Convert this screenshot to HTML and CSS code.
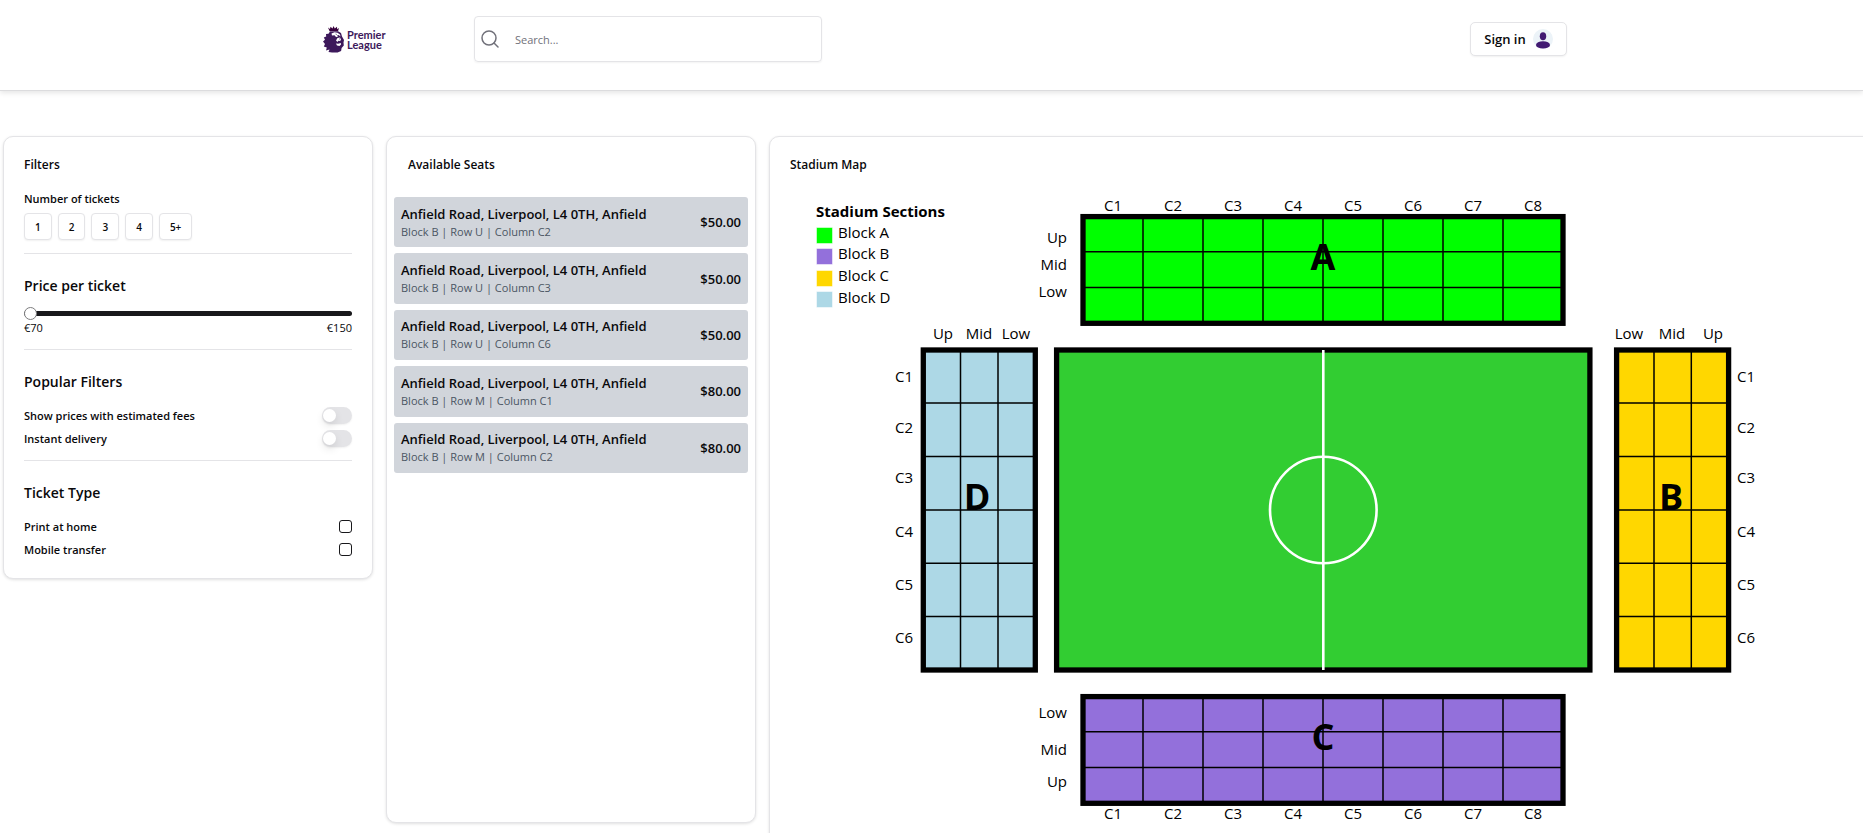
FILE: index.html
```html
<!DOCTYPE html>
<html lang="en">
<head>
<meta charset="utf-8">
<title>Premier League Tickets</title>
<link rel="stylesheet" href="styles.css">
</head>
<body>
<div class="page">
  <header class="topbar">
    <a class="logo" href="#" aria-label="Premier League">
      <svg class="logo-mark" viewBox="0 0 22 27" aria-hidden="true">
        <path fill="#37003c" d="M5 1.5 7 3 7.500.8 9.500 2.600 10.500 0l1.300 2.600L14 .8l.2 2.400L16 2l-1 3.200H6.600z"/>
        <path fill="#3d195b" d="M7 5.500 15 5.300 18 7l1 3.500 2 3.500-.5 2.500.3 3-2.200 2.500-.5 3-3.500 1.500H9L5.500 26l1-2.500-3.500 1 .8-3L.8 20.500 2 18 0 15.500l2-1.700L.8 11.500l2.400-1L3 8l2.500-.2z"/>
        <path fill="#fff" d="m8.500 7.500 3-1.200 3 .4 2.500 1.800.5 2-2-1.500-1.500.5 1 1.200-2 .3-1.500-1.700-2.500.2zM14.500 12l2.500-.5 1 2-.8 1.500-1.900-.3-.8 1.300-1.500-1.500zM13 17.500l2.200.2 2.600-.8.2 1.500-1.500 1.500-2.500-.4z"/>
        <path fill="#3d195b" d="m12 7.800 2 .1-.5.900zM16 12.800l1.200-.2-.4 1.200z"/>
      </svg>
      <span class="logo-name">Premier<br>League</span>
    </a>
    <label class="search">
      <svg class="search-icon" viewBox="0 0 18 18" aria-hidden="true"><circle cx="8" cy="8" r="7"/><path d="m13 13 4 4"/></svg>
      <input class="search-input" type="search" placeholder="Search..." aria-label="Search">
    </label>
    <button class="sign-in" type="button">Sign in
      <svg class="avatar" viewBox="0 0 20 20" aria-hidden="true"><circle cx="10" cy="10" r="10" fill="#ecf3f8"/><ellipse cx="10" cy="7.300" rx="3.200" ry="4" fill="#421a72"/><ellipse cx="10" cy="15.900" rx="7" ry="3.700" fill="#421a72"/></svg>
    </button>
  </header>

  <main class="columns">
    <section class="card filters">
      <h2 class="card-title">Filters</h2>
      <h3 class="label-title">Number of tickets</h3>
      <div class="counts">
        <button class="count" type="button">1</button>
        <button class="count" type="button">2</button>
        <button class="count" type="button">3</button>
        <button class="count" type="button">4</button>
        <button class="count" type="button">5+</button>
      </div>
      <hr class="rule">
      <h3 class="group-title">Price per ticket</h3>
      <input class="slider" type="range" min="70" max="150" value="70" aria-label="Price per ticket">
      <div class="range-ends"><span>€70</span><span>€150</span></div>
      <hr class="rule">
      <h3 class="group-title">Popular Filters</h3>
      <div class="options">
        <label class="option">Show prices with estimated fees<input class="switch" type="checkbox" role="switch"></label>
        <label class="option">Instant delivery<input class="switch" type="checkbox" role="switch"></label>
      </div>
      <hr class="rule rule-tight">
      <h3 class="group-title">Ticket Type</h3>
      <div class="options">
        <label class="option">Print at home<input class="tick" type="checkbox"></label>
        <label class="option">Mobile transfer<input class="tick" type="checkbox"></label>
      </div>
    </section>

    <section class="card seats">
      <h2 class="card-title">Available Seats</h2>
      <ul class="seat-list">
        <li class="seat"><div><p class="seat-place">Anfield Road, Liverpool, L4 0TH, Anfield</p><p class="seat-spot">Block B | Row U | Column C2</p></div><span class="price">$50.00</span></li>
        <li class="seat"><div><p class="seat-place">Anfield Road, Liverpool, L4 0TH, Anfield</p><p class="seat-spot">Block B | Row U | Column C3</p></div><span class="price">$50.00</span></li>
        <li class="seat"><div><p class="seat-place">Anfield Road, Liverpool, L4 0TH, Anfield</p><p class="seat-spot">Block B | Row U | Column C6</p></div><span class="price">$50.00</span></li>
        <li class="seat"><div><p class="seat-place">Anfield Road, Liverpool, L4 0TH, Anfield</p><p class="seat-spot">Block B | Row M | Column C1</p></div><span class="price">$80.00</span></li>
        <li class="seat"><div><p class="seat-place">Anfield Road, Liverpool, L4 0TH, Anfield</p><p class="seat-spot">Block B | Row M | Column C2</p></div><span class="price">$80.00</span></li>
      </ul>
    </section>

    <section class="card stadium">
      <h2 class="card-title">Stadium Map</h2>
      <svg class="map" viewBox="790 180 1068 680" role="img" aria-label="Stadium map">
        <g class="legend">
          <text class="legend-title" x="816" y="217">Stadium Sections</text>
          <rect class="a" x="816.500" y="227.500" width="16" height="16"/><text x="838" y="238">Block A</text>
          <rect class="c" x="816.500" y="248.500" width="16" height="16"/><text x="838" y="259">Block B</text>
          <rect class="b" x="816.500" y="270.500" width="16" height="16"/><text x="838" y="281">Block C</text>
          <rect class="d" x="816.500" y="291.500" width="16" height="16"/><text x="838" y="303">Block D</text>
        </g>

        <rect class="stand a" x="1083" y="216.600" width="480" height="106.700"/>
        <path class="lines" d="M1143 217v106M1203 217v106M1263 217v106M1323 217v106M1383 217v106M1443 217v106M1503 217v106M1083 251.700h480M1083 287.500h480"/>
        <g class="mid"><text x="1113" y="211">C1</text><text x="1173" y="211">C2</text><text x="1233" y="211">C3</text><text x="1293" y="211">C4</text><text x="1353" y="211">C5</text><text x="1413" y="211">C6</text><text x="1473" y="211">C7</text><text x="1533" y="211">C8</text></g>
        <g class="end"><text x="1067" y="243">Up</text><text x="1067" y="270">Mid</text><text x="1067" y="297">Low</text></g>
        <text class="letter" x="1323" y="270">A</text>

        <rect class="stand pitch" x="1056.600" y="350" width="533.300" height="320"/>
        <path class="chalk" d="M1323.300 350v320"/><circle class="chalk" cx="1323.300" cy="510" r="53.300"/>

        <rect class="stand d" x="923.300" y="350" width="112" height="320"/>
        <path class="lines" d="M960.500 350v320M998 350v320M923 403h112M923 456.500h112M923 510h112M923 563.200h112M923 616.500h112"/>
        <g class="mid"><text x="943" y="339">Up</text><text x="979" y="339">Mid</text><text x="1016" y="339">Low</text>
        <text x="904" y="382">C1</text><text x="904" y="433">C2</text><text x="904" y="483">C3</text><text x="904" y="537">C4</text><text x="904" y="590">C5</text><text x="904" y="643">C6</text></g>
        <text class="letter" x="977" y="510">D</text>

        <rect class="stand b" x="1616.600" y="350" width="112" height="320"/>
        <path class="lines" d="M1654 350v320M1691.300 350v320M1616 403h112M1616 456.500h112M1616 510h112M1616 563.200h112M1616 616.500h112"/>
        <g class="mid"><text x="1629" y="339">Low</text><text x="1672" y="339">Mid</text><text x="1713" y="339">Up</text>
        <text x="1746" y="382">C1</text><text x="1746" y="433">C2</text><text x="1746" y="483">C3</text><text x="1746" y="537">C4</text><text x="1746" y="590">C5</text><text x="1746" y="643">C6</text></g>
        <text class="letter" x="1671" y="510">B</text>

        <rect class="stand c" x="1083" y="696.600" width="480" height="106.700"/>
        <path class="lines" d="M1143 697v106M1203 697v106M1263 697v106M1323 697v106M1383 697v106M1443 697v106M1503 697v106M1083 731.700h480M1083 767.500h480"/>
        <g class="end"><text x="1067" y="718">Low</text><text x="1067" y="755">Mid</text><text x="1067" y="787">Up</text></g>
        <g class="mid"><text x="1113" y="819">C1</text><text x="1173" y="819">C2</text><text x="1233" y="819">C3</text><text x="1293" y="819">C4</text><text x="1353" y="819">C5</text><text x="1413" y="819">C6</text><text x="1473" y="819">C7</text><text x="1533" y="819">C8</text></g>
        <text class="letter" x="1323" y="750">C</text>
      </svg>
    </section>
  </main>
</div>
</body>
</html>
```
FILE: styles.css
```css
* { box-sizing: border-box; }
body, h2, h3, p, ul { margin: 0; padding: 0; }
body {
  font-family: "Open Sans", "Noto Sans", sans-serif;
  font-size: 12px;
  color: #09090b;
  background: #fff;
}
button, input { font: inherit; color: inherit; margin: 0; }
.page { height: 100vh; overflow: hidden; }

.topbar {
  display: flex;
  align-items: flex-start;
  height: 91px;
  padding: 16px 296px 0 323px;
  border-bottom: 1px solid #dcdcde;
  box-shadow: 0 2px 5px rgba(0, 0, 0, .1);
}
.logo {
  display: flex;
  align-items: center;
  gap: 2px;
  width: 151px;
  height: 46px;
  color: #3d195b;
  text-decoration: none;
}
.logo-mark { width: 22px; height: 27px; }
.logo-name {
  padding-top: 1px;
  font: 700 11px/10px Lato, sans-serif;
}
.search {
  display: flex;
  align-items: center;
  gap: 16px;
  width: 348px;
  height: 46px;
  padding: 0 6px;
  border: 1px solid #e4e4e7;
  border-radius: 4px;
  box-shadow: 0 1px 2px rgba(0, 0, 0, .05);
}
.search-icon {
  flex: none;
  width: 18px;
  height: 18px;
  fill: none;
  stroke: #71717a;
  stroke-width: 1.5;
  stroke-linecap: round;
}
.search-input {
  flex: 1;
  min-width: 0;
  padding: 0;
  font-size: 11px;
  border: 0;
  outline: 0;
  background: none;
}
.search-input::placeholder { color: #71717a; opacity: 1; }
.sign-in {
  display: flex;
  align-items: center;
  justify-content: center;
  gap: 7px;
  width: 97px;
  height: 34px;
  margin: 6px 0 0 auto;
  padding: 0;
  font-size: 13px;
  font-weight: 600;
  border: 1px solid #e4e4e7;
  border-radius: 5px;
  background: #fff;
  box-shadow: 0 1px 2px rgba(0, 0, 0, .06);
}
.avatar { width: 20px; height: 20px; }

.columns {
  display: grid;
  grid-template-columns: 1fr 1fr 3fr;
  gap: 13px;
  align-items: start;
  margin: 45px -16px 0 3px;
}
.card {
  min-width: 0;
  padding: 18px 20px 17px;
  border: 1px solid #e4e4e7;
  border-radius: 10px;
  background: #fff;
  box-shadow: 0 1px 3px rgba(0, 0, 0, .12);
}
.card-title { font-size: 12px; line-height: 20px; font-weight: 600; }
.label-title { margin: 15px 0 5px; font-size: 11px; line-height: 18px; font-weight: 600; }
.group-title { font-size: 14px; line-height: 22px; font-weight: 600; }
.counts { display: flex; gap: 6px; }
.count {
  height: 27px;
  padding: 0 10px;
  font-size: 10px;
  font-weight: 600;
  border: 1px solid #e4e4e7;
  border-radius: 4px;
  background: #fff;
  box-shadow: 0 1px 2px rgba(0, 0, 0, .06);
}
.rule { height: 1px; margin: 13px 0 21px; border: 0; background: #e4e4e7; }
.rule-tight { margin-top: 10px; }
.slider {
  display: block;
  appearance: none;
  width: 100%;
  height: 5px;
  margin: 14px 0 4px;
  border-radius: 3px;
  background: #18181b;
}
.slider::-webkit-slider-thumb {
  appearance: none;
  width: 13px;
  height: 13px;
  border: 1px solid #7c7c7e;
  border-radius: 50%;
  background: #fff;
}
.range-ends { display: flex; justify-content: space-between; font-size: 11px; line-height: 16px; }
.options { margin-top: 11px; }
.option {
  display: flex;
  align-items: center;
  justify-content: space-between;
  height: 23px;
  font-size: 11px;
  font-weight: 600;
}
.switch {
  appearance: none;
  width: 30px;
  height: 17px;
  padding: 2px 1px;
  border-radius: 9px;
  background: #e4e4e7;
  box-shadow: 0 1px 2px rgba(0, 0, 0, .06);
}
.switch::before {
  content: "";
  display: block;
  width: 13px;
  height: 13px;
  border-radius: 50%;
  background: #fff;
  box-shadow: 0 4px 8px rgba(0, 0, 0, .1);
}
.switch:checked { background: #18181b; }
.switch:checked::before { margin-left: auto; }
.tick {
  appearance: none;
  width: 13px;
  height: 13px;
  border: 1px solid #18181b;
  border-radius: 3px;
}
.tick:checked { background: #18181b; }

.seats { min-height: calc(100vh - 146px); padding: 18px 7px; }
.seats .card-title { padding-left: 14px; }
.seat-list {
  display: grid;
  grid-auto-rows: 1fr;
  gap: 6px;
  min-height: 276px;
  margin-top: 22px;
  list-style: none;
}
.seat {
  display: flex;
  align-items: center;
  justify-content: space-between;
  padding: 0 7px;
  border-radius: 3px;
  background: #d1d5db;
}
.seat-place { font-size: 13px; line-height: 18px; font-weight: 600; }
.seat-spot { font-size: 11px; line-height: 17px; color: #4b5563; }
.price { font-size: 13px; font-weight: 600; }

.map { display: block; width: 100%; margin-top: 5px; font-size: 15px; fill: #000; }
.legend rect { stroke: #fff; stroke-opacity: .5; }
.legend-title { font-weight: 700; }
.mid { text-anchor: middle; }
.end { text-anchor: end; }
.letter { font-size: 36px; font-weight: 700; text-anchor: middle; }
.stand { stroke: #000; stroke-width: 5.3; }
.lines { fill: none; stroke: #000; stroke-width: 1.5; }
.chalk { fill: none; stroke: #fff; stroke-width: 2.6; }
.a { fill: #0f0; }
.b { fill: #ffd700; }
.c { fill: #9370db; }
.d { fill: #add8e6; }
.pitch { fill: #32cd32; }
```
